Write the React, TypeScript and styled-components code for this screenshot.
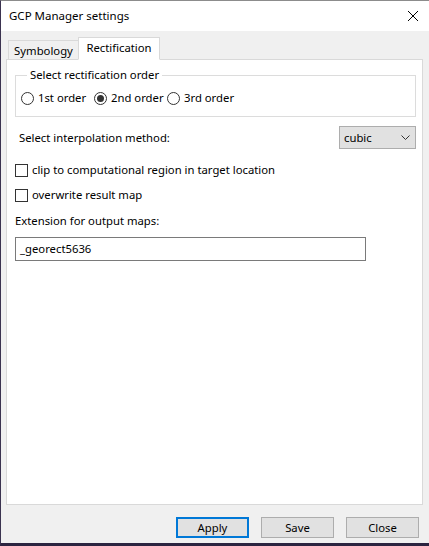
import React from "react";
import styled, { createGlobalStyle } from "styled-components";

const Global = createGlobalStyle`
  html, body { margin: 0; padding: 0; background: #2b2440; }
  * { box-sizing: border-box; }
  body { font-family: "Noto Sans", "Open Sans", sans-serif; font-size: 11.3px; line-height: 16px; color: #000; }
`;

const Window = styled.div`
  width: 429px;
  height: 546px;
  display: flex;
  flex-direction: column;
  border-top: 1px solid #8c8c8c;
  border-left: 1px solid #3b3350;
  border-bottom: 3px solid #2b2440;
  background: #f0f0f0;
`;

const TitleBar = styled.div`
  height: 30px;
  background: #fff;
  display: flex;
  align-items: center;
  justify-content: space-between;
  padding: 0 8px 0 8px;
  font-size: 11.5px;
`;

const CloseIcon = styled.svg`
  width: 12px;
  height: 12px;
  margin-right: 2px;
`;

const Body = styled.div`
  flex: 1;
  display: flex;
  flex-direction: column;
  padding: 6px 6px 0 5px;
`;

const TabRow = styled.div`
  display: flex;
  align-items: flex-end;
  height: 22px;
  padding-left: 2px;
  position: relative;
  z-index: 1;
`;

const Tab = styled.div<{ $active?: boolean }>`
  height: ${(p) => (p.$active ? 23 : 19)}px;
  width: ${(p) => (p.$active ? 82 : 71)}px;
  display: flex;
  justify-content: center;
  align-items: ${(p) => (p.$active ? "flex-start" : "center")};
  padding-top: ${(p) => (p.$active ? "2px" : "1px")};
  background: ${(p) => (p.$active ? "#fff" : "#f0f0f0")};
  border: 1px solid #d9d9d9;
  border-bottom: ${(p) => (p.$active ? "1px solid #fff" : "none")};
  margin-bottom: ${(p) => (p.$active ? "-1px" : "0")};
  ${(p) => (p.$active ? "margin-left: -1px;" : "")}
`;

const Panel = styled.div`
  height: 446px;
  background: #fff;
  border: 1px solid #d9d9d9;
  padding: 7px 6px 0 8px;
  display: flex;
  flex-direction: column;
`;

const GroupBox = styled.fieldset`
  margin: 0;
  padding: 7px 4px 10px 5px;
  border: 1px solid #dcdcdc;
  width: 401px;
  display: flex;
  align-items: center;
`;

const Legend = styled.legend`
  padding: 0 3px;
  margin-left: 6px;
`;

const RadioLabel = styled.label`
  display: flex;
  align-items: center;
  gap: 4px;
  width: 73px;
`;

const RadioCircle = styled.span<{ $checked?: boolean }>`
  width: 13px;
  height: 13px;
  border-radius: 50%;
  border: 1px solid #333;
  background: #fff;
  display: flex;
  align-items: center;
  justify-content: center;
  &::after {
    content: "";
    width: 7px;
    height: 7px;
    border-radius: 50%;
    background: ${(p) => (p.$checked ? "#333" : "transparent")};
  }
`;

const InterpRow = styled.div`
  display: flex;
  align-items: center;
  justify-content: space-between;
  margin-top: 9px;
  padding-left: 4px;
  width: 401px;
`;

const Combo = styled.div`
  width: 77px;
  height: 23px;
  background: #e1e1e1;
  border: 1px solid #adadad;
  display: flex;
  align-items: center;
  justify-content: space-between;
  padding: 0 5px 0 4px;
`;

const CheckRow = styled.label<{ $mt?: number }>`
  display: flex;
  align-items: center;
  gap: 4px;
  margin-top: ${(p) => p.$mt ?? 0}px;
`;

const CheckBox = styled.span`
  width: 13px;
  height: 13px;
  border: 1px solid #333;
  background: #fff;
`;

const Label = styled.div<{ $mt?: number }>`
  margin-top: ${(p) => p.$mt ?? 0}px;
`;

const TextInput = styled.div`
  margin-top: 8px;
  width: 351px;
  height: 24px;
  border: 1px solid #7a7a7a;
  display: flex;
  align-items: center;
  padding-left: 4px;
`;

const ButtonRow = styled.div`
  display: flex;
  justify-content: flex-end;
  gap: 12px;
  padding: 12px 4px 0 0;
`;

const Button = styled.div<{ $default?: boolean }>`
  width: 73px;
  height: 21px;
  background: #e1e1e1;
  border: ${(p) => (p.$default ? "2px solid #0078d7" : "1px solid #adadad")};
  display: flex;
  align-items: center;
  justify-content: center;
`;

export default function App() {
  return (
    <>
      <Global />
      <Window>
        <TitleBar>
          <span>GCP Manager settings</span>
          <CloseIcon viewBox="0 0 12 12">
            <path d="M1 1 L11 11 M11 1 L1 11" stroke="#000" strokeWidth="1" fill="none" />
          </CloseIcon>
        </TitleBar>
        <Body>
          <TabRow>
            <Tab>Symbology</Tab>
            <Tab $active>Rectification</Tab>
          </TabRow>
          <Panel>
            <GroupBox>
              <Legend>Select rectification order</Legend>
              <RadioLabel>
                <RadioCircle />
                <span>1st order</span>
              </RadioLabel>
              <RadioLabel>
                <RadioCircle $checked />
                <span>2nd order</span>
              </RadioLabel>
              <RadioLabel>
                <RadioCircle />
                <span>3rd order</span>
              </RadioLabel>
            </GroupBox>
            <InterpRow>
              <span>Select interpolation method:</span>
              <Combo>
                <span>cubic</span>
                <svg width="9" height="5" viewBox="0 0 9 5">
                  <path d="M0.5 0.5 L4.5 4.5 L8.5 0.5" stroke="#333" fill="none" />
                </svg>
              </Combo>
            </InterpRow>
            <CheckRow $mt={13}>
              <CheckBox />
              <span>clip to computational region in target location</span>
            </CheckRow>
            <CheckRow $mt={9}>
              <CheckBox />
              <span>overwrite result map</span>
            </CheckRow>
            <Label $mt={10}>Extension for output maps:</Label>
            <TextInput>_georect5636</TextInput>
          </Panel>
          <ButtonRow>
            <Button $default>Apply</Button>
            <Button>Save</Button>
            <Button>Close</Button>
          </ButtonRow>
        </Body>
      </Window>
    </>
  );
}
